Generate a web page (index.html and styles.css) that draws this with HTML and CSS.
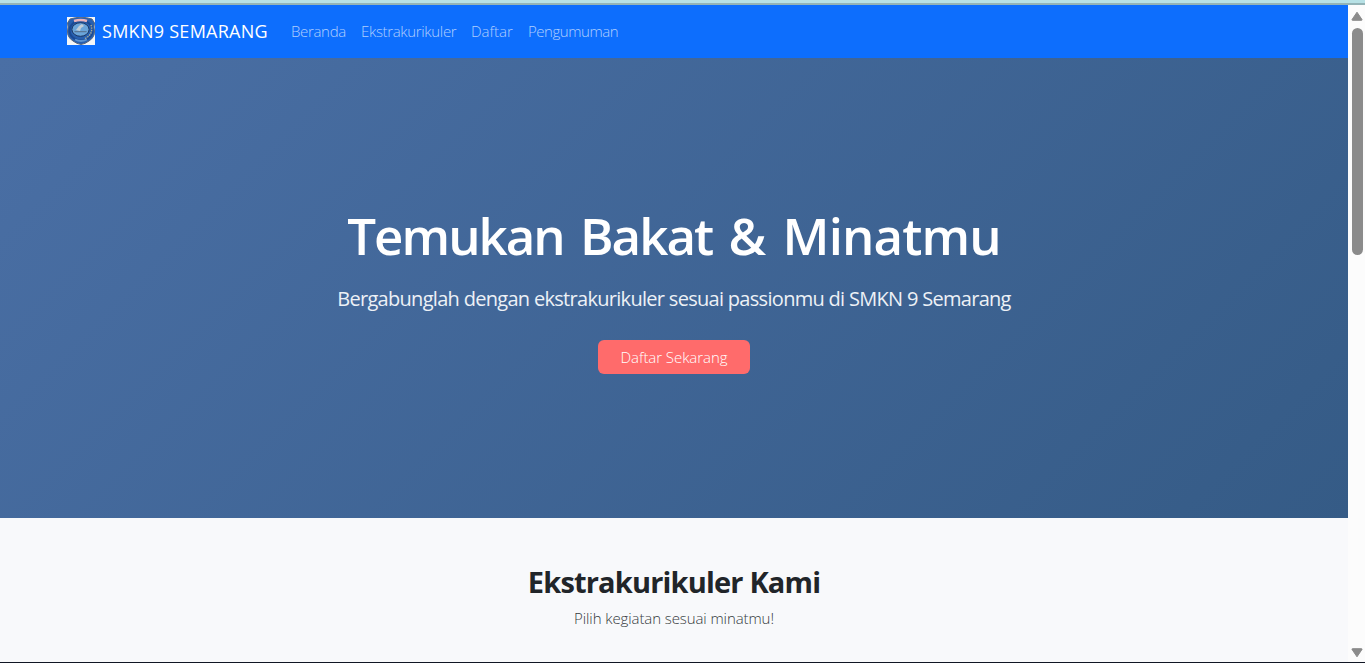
FILE: index.html
```html
<!DOCTYPE html>
<html lang="id">
<head>
<meta charset="utf-8">
<title>SMKN9 Semarang</title>
<link rel="stylesheet" href="styles.css">
</head>
<body>
<div class="top-strip"></div>
<div class="viewport">
  <div class="page">
    <nav class="navbar">
      <a class="brand">
        <svg class="logo" viewBox="0 0 28 28">
          <rect width="28" height="28" fill="#f4f6f8"/>
          <path d="M3 2Q14-1.5 25 2L27.5 6Q26.5 10 27.5 14Q28 20 22 24Q18 27 14 27.5Q10 27 6 24Q0 20 .5 14Q1.5 10 .5 6Z" fill="#2860b0" stroke="#59677d" stroke-width="1"/>
          <ellipse cx="14" cy="13.5" rx="11.5" ry="10" fill="none" stroke="#1b4a94" stroke-width="2"/>
          <path d="M18 21.5Q27 17 24 8" fill="none" stroke="#a9ac9b" stroke-width="1.4" stroke-dasharray="1.5 1"/>
          <ellipse cx="13.5" cy="12.5" rx="8.6" ry="6.8" fill="#6ba5da" stroke="#1b3560" stroke-width="1"/>
          <path d="M7 4Q14 2 20 4" fill="none" stroke="#e9b4bd" stroke-width="2.4"/>
          <path d="M9 13L12 9L15 7L17 9L14 11L13 14Z" fill="#c3cdd5"/>
          <path d="M7 14H20L19 15.2H8Z" fill="#5b7898"/>
          <path d="M8 22.5Q14 25.5 20 22.5" fill="none" stroke="#5c94d2" stroke-width="1.8"/>
        </svg>
        <span class="brand-name">SMKN9 SEMARANG</span>
      </a>
      <a class="nav-link n1">Beranda</a>
      <a class="nav-link n2">Ekstrakurikuler</a>
      <a class="nav-link n3">Daftar</a>
      <a class="nav-link n4">Pengumuman</a>
    </nav>
    <header class="hero">
      <h1 class="hero-title">Temukan Bakat <span class="loose">&amp; Minatmu</span></h1>
      <p class="hero-lead">Bergabunglah dengan ekstrakurikuler sesuai passionmu di SMKN 9 Semarang</p>
      <a class="cta">Daftar Sekarang</a>
    </header>
    <section class="extras">
      <h2 class="extras-title">Ekstrakurikuler Kami</h2>
      <p class="extras-text">Pilih kegiatan sesuai minatmu!</p>
    </section>
  </div>
  <div class="scrollbar">
    <svg class="arrow" viewBox="0 0 12 10"><path d="M6 1.2L11 8.6Q11.3 9.3 10.5 9.3H1.5Q.7 9.3 1 8.6Z" fill="#8b8b8b" stroke="#8b8b8b" stroke-linejoin="round"/></svg>
    <div class="thumb"></div>
    <svg class="arrow arrow-down" viewBox="0 0 12 10"><path d="M6 8.8L11 1.4Q11.3 .7 10.5 .7H1.5Q.7 .7 1 1.4Z" fill="#8b8b8b" stroke="#8b8b8b" stroke-linejoin="round"/></svg>
  </div>
</div>
<div class="bottom-line"></div>
</body>
</html>
```
FILE: styles.css
```css
* { box-sizing: border-box; }
body {
  margin: 0;
  height: 663px;
  display: flex;
  flex-direction: column;
  overflow: hidden;
  font-family: "Segoe UI", "Open Sans", "Noto Sans", sans-serif;
  font-size: 15px;
  color: #212529;
}
h1, h2, p { margin: 0; white-space: nowrap; }
.top-strip { height: 5px; background: #b7e1e5; border-bottom: 2px solid #93b4b7; }
.viewport { height: 657px; display: flex; }
.page { width: 1348px; }
.navbar {
  height: 53px;
  padding: 0 0 2px 67px;
  display: flex;
  align-items: center;
  background: #0d6efd;
  white-space: nowrap;
}
.brand { width: 224px; display: flex; align-items: center; gap: 7px; color: #fff; font-size: 18px; }
.logo { width: 28px; height: 28px; flex: none; }
.brand-name { letter-spacing: 0.27px; }
.nav-link { color: rgba(255, 255, 255, .68); font-weight: 300; letter-spacing: -0.33px; }
.n1 { width: 70px; }
.n2 { width: 110px; }
.n3 { width: 57px; letter-spacing: 0; }
.n4 { letter-spacing: -0.45px; }
.hero {
  height: 460px;
  padding-top: 139px;
  display: flex;
  flex-direction: column;
  align-items: center;
  color: #fff;
  background: linear-gradient(135deg, #4a6fa5, #355b86);
}
.hero-title { font-size: 51px; line-height: 76px; font-weight: 600; letter-spacing: -2px; word-spacing: 5px; }
.loose { letter-spacing: -0.9px; }
.hero-lead { margin-top: 11px; font-size: 20px; line-height: 30px; letter-spacing: -0.7px; color: #edf1f6; }
.cta {
  width: 152px;
  height: 34px;
  margin-top: 26px;
  border-radius: 6px;
  background: #ff6b6b;
  line-height: 34px;
  text-align: center;
  font-weight: 300;
  letter-spacing: -0.06px;
}
.extras { height: 144px; padding-top: 45px; background: #f8f9fb; text-align: center; }
.extras-title { font-size: 29px; line-height: 38px; font-weight: 700; letter-spacing: -0.82px; }
.extras-text { margin-top: 5px; line-height: 24px; font-weight: 300; letter-spacing: -0.09px; color: #35393d; }
.scrollbar {
  width: 17px;
  padding: 6px 0 4px 3px;
  display: flex;
  flex-direction: column;
  background: #fcfcfc;
}
.arrow { width: 12px; height: 10px; flex: none; }
.thumb { width: 11px; height: 227px; margin: 7px 0 0 1px; border-radius: 6px; background: #8b8b8b; }
.arrow-down { margin-top: auto; }
.bottom-line { height: 1px; background: #101624; }
```
